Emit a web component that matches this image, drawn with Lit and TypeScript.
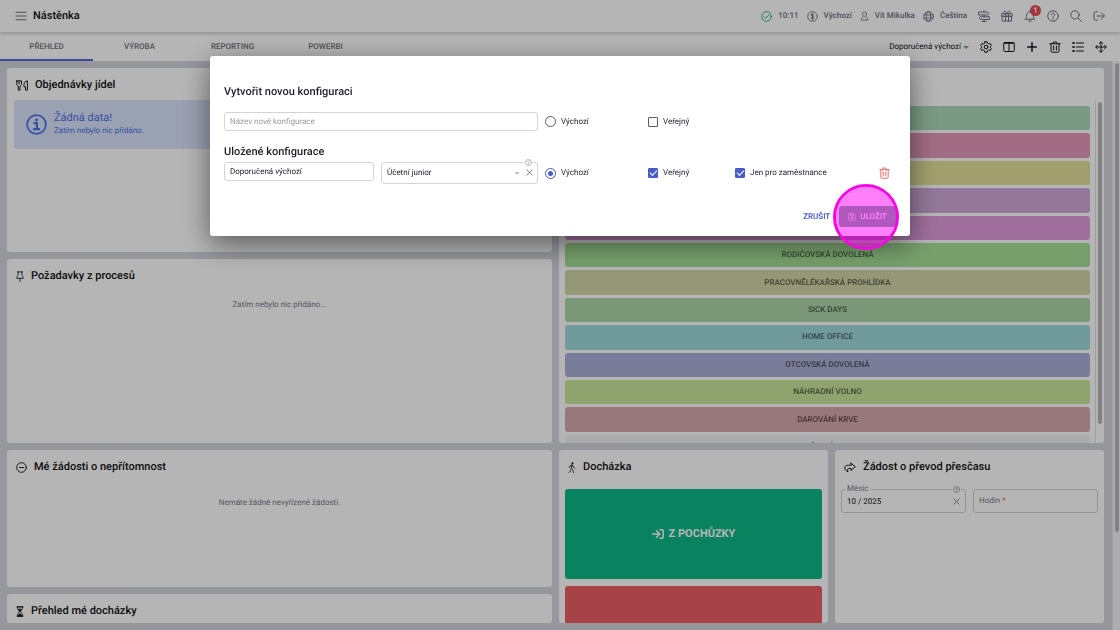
import { LitElement, html, css, svg, nothing } from "lit";
import { customElement, property } from "lit/decorators.js";
import { classMap } from "lit/directives/class-map.js";
import { styleMap } from "lit/directives/style-map.js";

const ICONS: Record<string, unknown> = {
  menu: svg`<path d="M2 4.5h20M2 12h20M2 19.5h20"/>`,
  checkCircle: svg`<circle cx="12" cy="12" r="10.5"/><path d="M7 12.5l3.5 3.5 6.5-7"/>`,
  dollar: svg`<circle cx="12" cy="12" r="10.5" stroke-dasharray="6 2.2"/><path d="M15 9c0-1.500-1.300-2.300-3-2.300s-3 .8-3 2.400c0 3.500 6.200 2 6.200 5.400 0 1.700-1.400 2.600-3.200 2.600s-3.200-.8-3.200-2.500M12 4.800v14.400"/>`,
  user: svg`<circle cx="12" cy="7.500" r="5.500"/><path d="M8.500 13.500C5 14.800 3.500 17.500 3.500 22h17c0-4.500-1.500-7.200-5-8.500"/>`,
  globe: svg`<circle cx="12" cy="12" r="10.500"/><ellipse cx="12" cy="12" rx="4.700" ry="10.500"/><path d="M2 8.500h20M2 15.500h20"/>`,
  signpost: svg`<path d="M12 1v3M12 10v3.500M12 19v4M8 23h8M2 4h17l3 3-3 3H2zM22 13.500H5l-3 2.700L5 19h17z"/>`,
  gift: svg`<path d="M1.500 7.500h21v5h-21zM3 12.500h18v9.500H3zM9 7.500V22M15 7.500V22M12 7.500C10 2 8 1.500 6.500 2.500 4.500 4 6 7 7 7.500M12 7.500c2-5.500 4-6 5.500-5 2 1.500.5 4.500-.5 5"/>`,
  bell: svg`<path d="M12 1.500v2M2.500 18.500h19c-2.500-2.500-3-4-3-8.500 0-4-2.700-6.500-6.500-6.500S5.500 6 5.500 10c0 4.500-.5 6-3 8.500zM9.500 22h5"/>`,
  help: svg`<circle cx="12" cy="12" r="10.500"/><path d="M8.800 9.500c0-2 1.500-3 3.300-3s3.200 1.100 3.200 2.800c0 2.400-3.200 2.500-3.200 4.900M12.100 16.500v2"/>`,
  search: svg`<circle cx="9.800" cy="9.800" r="8.300"/><path d="M16 16l7 7"/>`,
  logout: svg`<path d="M9 3.500H4.500c-1.500 0-2.500 1-2.500 2.500v12c0 1.500 1 2.500 2.500 2.500H9M8 12h15M16.500 5.500L23 12l-6.500 6.500"/>`,
  gear: svg`<path d="M9.700 1.500h4.600l.8 3.200 2.200 1.300 3.200-.9 2.200 4-2.300 2.300v1.200l2.300 2.300-2.200 4-3.200-.9-2.200 1.300-.8 3.200H9.700l-.8-3.200L6.700 18l-3.200.9-2.200-4 2.300-2.300v-1.200L1.300 9.100l2.200-4 3.200.9 2.200-1.300z"/><circle cx="12" cy="12" r="3.600"/>`,
  columns: svg`<rect x="1.500" y="3" width="21" height="18" rx="2"/><path d="M12 3v18M2 4.500h20"/>`,
  plus: svg`<path d="M12 3.500v17M3.500 12h17"/>`,
  trash: svg`<path d="M1.500 5.500h21M7.500 5.500L9 2h6l1.500 3.500M4 5.500V20c0 1.500 1 2.500 2.500 2.500h11c1.500 0 2.500-1 2.500-2.500V5.500M9.200 10v8M14.800 10v8"/>`,
  list: svg`<path d="M8.500 4h14.500M8.500 12h14.500M8.500 20h14.500"/><path d="M2.500 4h1M2.500 12h1M2.500 20h1" stroke-width="4"/>`,
  move: svg`<path d="M12 2v20M2 12h20M8.500 5L12 1.500 15.500 5M8.500 19l3.500 3.500 3.500-3.500M5 8.500L1.500 12 5 15.500M19 8.500l3.500 3.500-3.500 3.500"/>`,
  food: svg`<path d="M1.500 2v6.500c0 2.500 1.200 4 3 4.700V22h3.500v-8.800c1.800-.7 3-2.200 3-4.700V2H1.500zM6.200 2v6.500M22 2c-4 .5-6 4-6 8v5h3v7h3z"/>`,
  info: svg`<circle cx="12" cy="12" r="10.700"/><path d="M9.500 10.500h3V17M9 17.300h6" stroke-width="2.500"/><circle cx="12" cy="6.800" r="1.700" fill="currentColor" stroke="none"/>`,
  pin: svg`<path d="M4 2h16M6.500 2L6 9.500C4 11 2.500 13 2 16h20c-.5-3-2-5-4-6.500L17.500 2M12 16v7"/>`,
  minusCircle: svg`<circle cx="12" cy="12" r="10.500"/><path d="M7.500 12h9"/>`,
  hourglass: svg`<path d="M3 2h18M3 22h18" stroke-width="3"/><path d="M5 2v3c0 3.500 4.500 5 4.500 7S5 15.500 5 19v3h14v-3c0-3.500-4.500-5-4.500-7S19 8.500 19 5V2"/><path d="M8 7h8l-4 5zM7 21l5-5 5 5z" fill="currentColor"/>`,
  walk: svg`<ellipse cx="13.500" cy="3" rx="3" ry="2.200" fill="currentColor" stroke="none"/><path d="M4 12.500l2.500-4.500 6-1.500 3 4.500 5 2M12 7l-2 7 4.500 3.500 2 5.500M9 15.500L7.500 19 3 23"/>`,
  share: svg`<path d="M14 2.500l8.500 8-8.500 8v-4.500H9.500c-2.500 0-3 2-1.500 7.500-4-2.500-6.500-5-6.500-8.500 0-3.500 2.500-6 7-6H14z"/>`,
  login: svg`<path d="M1 12h14M9 5.500l6.500 6.500L9 18.500M16 3.500h4c1.500 0 2.500 1 2.500 2.500v12c0 1.500-1 2.500-2.500 2.500h-4"/>`,
  close: svg`<path d="M3 3l18 18M21 3L3 21"/>`,
  save: svg`<path d="M2 4c0-1.200.8-2 2-2h13l5 5v13c0 1.200-.8 2-2 2H4c-1.200 0-2-.8-2-2zM7 2v5.500h9V2"/><circle cx="12" cy="14.500" r="3.500"/>`,
};

const icon = (name: string, w = 12, stroke = 2, h = w) => svg`
  <svg class="icon" width=${w} height=${h} viewBox="0 0 24 24" preserveAspectRatio="none" fill="none"
    stroke="currentColor" stroke-width=${stroke} stroke-linecap="round" stroke-linejoin="round" aria-hidden="true">${ICONS[name]}</svg>`;

const base = css`
  *, *::before, *::after { box-sizing: border-box; }
  :host { font-family: Roboto, sans-serif; font-size: 8px; line-height: 12px; text-rendering: geometricPrecision; }
  .icon { display: block; flex: none; }
  button, input, select { font: inherit; color: inherit; margin: 0; text-rendering: inherit; }
  button { background: none; border: 0; padding: 0; cursor: pointer; }
  h1, h2, h3, p { margin: 0; }
`;

@customElement("dash-card")
export class DashCard extends LitElement {
  @property() heading = "";
  @property() glyph = "";
  @property({ type: Number }) glyphWidth = 12;

  static styles = [base, css`
    :host { display: flex; flex-direction: column; min-width: 0; min-height: 0; overflow: hidden; background: #fff; border-radius: 3px; }
    header { display: flex; align-items: center; gap: 7px; height: 32px; flex: none; padding: 2px 9px 0; color: #111; }
    h2 { font-size: 11px; font-weight: 500; line-height: 14px; }
    .body { flex: 1; min-height: 0; display: flex; flex-direction: column; }
  `];

  render() {
    return html`
      <header>${this.glyph ? icon(this.glyph, this.glyphWidth, 2, 11) : nothing}<h2>${this.heading}</h2></header>
      <div class="body"><slot></slot></div>`;
  }
}

@customElement("config-dialog")
export class ConfigDialog extends LitElement {
  static styles = [base, css`
    :host { display: block; width: 700px; max-width: 100%; }
    .dialog { background: #fff; border-radius: 3px; padding: 29px 14px 9px; color: #1d1d2b; box-shadow: 0 8px 28px rgba(0, 0, 0, 0.5); }
    h3 { font-size: 11px; font-weight: 500; line-height: 14px; }
    .row { display: grid; align-items: center; gap: 7px;
      grid-template-columns: minmax(0, 150fr) minmax(0, 157fr) minmax(0, 96fr) minmax(0, 80fr) minmax(0, 137fr) 17px; }
    .create { margin: 13px 0 14px; }
    .create .text { grid-column: span 2; }
    .saved { margin-top: 3px; }
    .saved .text { align-self: start; }
    .text, .pick select { width: 100%; height: 19px; padding: 0 5px; border: 1px solid #d4d4d8; border-radius: 3px; background: #fff; outline: none; }
    .text::placeholder { color: #9a9a9a; opacity: 1; }
    .pick { position: relative; display: block; }
    .pick select { display: block; height: 22px; appearance: none; }
    .caret { position: absolute; right: 18px; top: 10px; border: 3px solid transparent; border-top-color: #c4c4c8; border-bottom: 0; }
    .clear { position: absolute; right: 5px; top: 7px; color: #6e6e86; }
    .hint { position: absolute; right: 5px; top: -3px; background: #fff; color: #8a8a99; padding: 0 1px; }
    .choice { display: flex; align-items: center; gap: 5px; white-space: nowrap; }
    .choice input { appearance: none; flex: none; display: grid; place-items: center; border: 1px solid #5c5c66; }
    .choice input[type="radio"] { width: 11px; height: 11px; border-radius: 50%; }
    .choice input[type="radio"]:checked { border-color: #4a5cc5; }
    .choice input[type="radio"]:checked::after { content: ""; width: 5px; height: 5px; border-radius: 50%; background: #4a5cc5; }
    .choice input[type="checkbox"] { width: 10px; height: 10px; border-radius: 1px; }
    .choice input[type="checkbox"]:checked { background: #4a5cc5; border-color: #4a5cc5; }
    .choice input[type="checkbox"]:checked::after { content: ""; width: 7px; height: 4px; border: solid #fff; border-width: 0 0 1px 1px; transform: translateY(-1px) rotate(-45deg); }
    .delete { color: #e26a6a; justify-self: start; }
    footer { display: flex; justify-content: flex-end; align-items: center; gap: 9px; margin-top: 22px; font-weight: 600; }
    .cancel { color: #4a5cc5; }
    .spot { position: relative; }
    .spot::after { content: ""; position: absolute; left: -6px; top: 50%; width: 66px; height: 66px; transform: translateY(-50%);
      border: 3px solid #f506e3; border-radius: 50%; background: rgba(255, 0, 247, 0.5); background-clip: padding-box; pointer-events: none; }
    .save { display: flex; align-items: center; gap: 4px; height: 21px; padding: 0 9px; border-radius: 3px; color: #fff; background: #62b084; }
  `];

  render() {
    return html`
      <form class="dialog" role="dialog" aria-label="Vytvořit novou konfiguraci" @submit=${(e: Event) => e.preventDefault()}>
        <h3>Vytvořit novou konfiguraci</h3>
        <div class="row create">
          <input class="text" type="text" placeholder="Název nové konfigurace" aria-label="Název nové konfigurace" />
          <label class="choice"><input type="radio" name="default" />Výchozí</label>
          <label class="choice"><input type="checkbox" />Veřejný</label>
        </div>
        <h3>Uložené konfigurace</h3>
        <div class="row saved">
          <input class="text" type="text" .value=${"Doporučená výchozí"} aria-label="Název konfigurace" />
          <div class="pick">
            <select aria-label="Role"><option>Účetní junior</option></select>
            <span class="caret"></span>
            <button class="clear" type="button" aria-label="Vymazat">${icon("close", 7, 3)}</button>
            <span class="hint">${icon("help", 7, 2)}</span>
          </div>
          <label class="choice"><input type="radio" name="default" checked />Výchozí</label>
          <label class="choice"><input type="checkbox" checked />Veřejný</label>
          <label class="choice"><input type="checkbox" checked />Jen pro zaměstnance</label>
          <button class="delete" type="button" aria-label="Smazat">${icon("trash", 11, 2, 12)}</button>
        </div>
        <footer>
          <button class="cancel" type="button">ZRUŠIT</button>
          <div class="spot"><button class="save" type="submit">${icon("save", 8, 2)}ULOŽIT</button></div>
        </footer>
      </form>`;
  }
}

interface Absence { label?: string; color: string; plain?: boolean; }

@customElement("app-root")
export class AppRoot extends LitElement {
  private tabs = ["PŘEHLED", "VÝROBA", "REPORTING", "POWERBI"];
  private tools = ["gear", "columns", "plus", "trash", "list", "move"];
  private absences: Absence[] = [
    { color: "#acd9ba" },
    { color: "#e49aba" },
    { color: "#e4e19b" },
    { color: "#d0aad9" },
    { color: "#e09cdc" },
    { label: "RODIČOVSKÁ DOVOLENÁ", color: "#a8e198" },
    { label: "PRACOVNĚLÉKAŘSKÁ PROHLÍDKA", color: "#d2d6a6" },
    { label: "SICK DAYS", color: "#acd6a9" },
    { label: "HOME OFFICE", color: "#9fd9dc" },
    { label: "OTCOVSKÁ DOVOLENÁ", color: "#adb1d9" },
    { label: "NÁHRADNÍ VOLNO", color: "#c8e69c" },
    { label: "DAROVÁNÍ KRVE", color: "#d6a9ac" },
    { label: "SLUŽEBNÍ CESTA", color: "#f3f3f5", plain: true },
  ];

  static styles = [base, css`
    :host { display: flex; flex-direction: column; height: 100vh; overflow: hidden; background: #d3d3de; color: #111; }
    .top { display: flex; align-items: center; height: 33px; flex: none; padding: 0 15px; background: #fff; border-bottom: 1px solid #dcdce0; box-shadow: 0 1px 3px rgba(0, 0, 0, 0.2); position: relative; color: #6f6f82; }
    .top h1 { font-size: 11px; font-weight: 500; line-height: 14px; margin-left: 6px; color: #111; }
    .status { display: flex; align-items: center; gap: 11px; margin-left: auto; font-weight: 500; }
    .who { display: flex; gap: 8px; }
    .pair { display: flex; align-items: center; gap: 6px; }
    .ok { color: #1db46a; }
    .bell { position: relative; }
    .badge { position: absolute; right: -5px; top: -5px; min-width: 11px; height: 11px; border-radius: 6px; background: #ea4b55; color: #fff; line-height: 11px; text-align: center; }
    .bar { display: flex; align-items: center; height: 28px; flex: none; padding-right: 13px; background: #fff; }
    nav { display: flex; align-self: stretch; flex: 1; }
    nav button { flex: 0 1 93px; font-weight: 500; color: #73737a; border-bottom: 2px solid transparent; padding-top: 1px; }
    nav .active { border-color: #5568d8; }
    .tools { display: flex; align-items: center; gap: 11px; color: #14141f; }
    .config { display: flex; align-items: center; gap: 2px; }
    .down { border: 3px solid transparent; border-top-color: #8f8f99; border-bottom: 0; }
    .page { flex: 1; min-height: 0; display: flex; }
    .grid { flex: 1; min-width: 0; display: grid; gap: 7px; padding: 7px 8px 7px 7px; grid-template-columns: repeat(4, minmax(0, 1fr)); grid-template-rows: 184px 184px 137px minmax(0, 1fr); }
    .wide { grid-column: span 2; }
    .col3 { grid-column: 3; grid-row: 3 / span 2; }
    .col4 { grid-column: 4; grid-row: 3 / span 2; }
    .absence { grid-column: 3 / span 2; grid-row: 1 / span 2; }
    .rail { flex: none; width: 8px; padding: 2px; background: #f6f6f8; border-left: 1px solid #e0e0e4; }
    .thumb { width: 4px; border-radius: 2px; background: #b8b8b8; }
    .rail .thumb { height: 83%; }
    .info { display: flex; align-items: center; gap: 7px; height: 49px; margin: 0 7px; padding: 0 12px; border-radius: 3px; background: #dae3fb; color: #4c73e8; }
    .info p { padding-bottom: 2px; }
    .info strong { display: block; font-size: 11px; font-weight: 400; line-height: 14px; }
    .empty { text-align: center; color: #7b7b8c; padding-top: 8px; }
    .spaced { padding-top: 15px; }
    .scroller { flex: 1; min-height: 0; display: flex; overflow: hidden; }
    .list { flex: 1; height: 103%; margin: 6px 5px 0 6px; display: grid; grid-auto-rows: minmax(0, 1fr); gap: 3px; }
    .list button { border-radius: 3px; font-weight: 500; color: rgba(0, 0, 0, 0.6); }
    .list .plain { color: #4a5cc5; }
    .list-rail { width: 9px; padding: 2px; border-left: 1px solid #e0e0e4; }
    .list-rail .thumb { height: 95%; }
    .punch { display: flex; flex-direction: column; gap: 7px; padding: 7px 6px 0; }
    .punch button { display: flex; align-items: center; justify-content: center; gap: 5px; height: 90px; border-radius: 3px; font-size: 11px; font-weight: 700; color: #fff; background: #0db986; }
    .punch .leave { background: #ed5e68; }
    .form { display: grid; grid-template-columns: 1fr 1fr; gap: 7px; padding: 7px 6px 0; }
    .field { position: relative; display: block; }
    .field input { width: 100%; height: 24px; padding: 0 5px; border: 1px solid #cfcfd6; border-radius: 3px; background: none; outline: none; display: block; }
    .field span, .field button { position: absolute; color: #7b7b8c; }
    .field .label { left: 4px; top: -6px; padding: 0 2px; background: #fff; }
    .field .inner { left: 6px; top: 6px; }
    .field em { color: #e5484d; font-style: normal; }
    .field .clear { right: 6px; top: 9px; }
    .field .hint { right: 5px; top: -3px; padding: 0 1px; background: #fff; }
    .backdrop { position: fixed; inset: 0; display: flex; justify-content: center; align-items: flex-start; padding-top: 56px; background: rgba(0, 0, 0, 0.29); }
  `];

  render() {
    return html`
      <div class="top">
        <button aria-label="Menu">${icon("menu", 12, 2)}</button>
        <h1>Nástěnka</h1>
        <div class="status">
          <div class="who">
            <span class="pair"><span class="ok">${icon("checkCircle", 11)}</span>10:11</span>
            <span class="pair">${icon("dollar", 11)}Výchozí</span>
            <span class="pair">${icon("user", 9, 2, 10)}Vít Mikulka</span>
            <span class="pair">${icon("globe", 11)}Čeština</span>
          </div>
          ${icon("signpost", 12)}
          ${icon("gift", 12)}
          <span class="bell">${icon("bell", 12)}<span class="badge">1</span></span>
          ${icon("help", 12)}${icon("search", 12)}${icon("logout", 12)}
        </div>
      </div>
      <div class="bar">
        <nav>${this.tabs.map((t, i) => html`<button class=${classMap({ active: i === 0 })}>${t}</button>`)}</nav>
        <div class="tools">
          <button class="config">Doporučená výchozí<span class="down"></span></button>
          ${this.tools.map((t) => html`<button aria-label=${t}>${icon(t, 12, t === "plus" ? 3 : 2)}</button>`)}
        </div>
      </div>
      <div class="page">
        <main class="grid">
          <dash-card class="wide" heading="Objednávky jídel" glyph="food" glyphWidth="12">
            <div class="info">${icon("info", 21, 2)}<p><strong>Žádná data!</strong>Zatím nebylo nic přidáno.</p></div>
          </dash-card>
          <dash-card class="absence">
            <div class="scroller">
              <div class="list">
                ${this.absences.map((a) => html`<button class=${classMap({ plain: !!a.plain })} style=${styleMap({ backgroundColor: a.color })}>${a.label ?? nothing}</button>`)}
              </div>
              <div class="list-rail"><div class="thumb"></div></div>
            </div>
          </dash-card>
          <dash-card class="wide" heading="Požadavky z procesů" glyph="pin" glyphWidth="8">
            <p class="empty">Zatím nebylo nic přidáno...</p>
          </dash-card>
          <dash-card class="wide" heading="Mé žádosti o nepřítomnost" glyph="minusCircle" glyphWidth="11">
            <p class="empty spaced">Nemáte žádné nevyřízené žádosti.</p>
          </dash-card>
          <dash-card class="col3" heading="Docházka" glyph="walk" glyphWidth="8">
            <div class="punch">
              <button>${icon("login", 12, 3)}Z POCHŮZKY</button>
              <button class="leave" aria-label="Odchod"></button>
            </div>
          </dash-card>
          <dash-card class="col4" heading="Žádost o převod přesčasu" glyph="share" glyphWidth="12">
            <div class="form">
              <div class="field">
                <input id="month" type="text" .value=${"10 / 2025"} />
                <label for="month"><span class="label">Měsíc</span></label>
                <button class="clear" aria-label="Vymazat">${icon("close", 7, 3)}</button>
                <span class="hint">${icon("help", 7)}</span>
              </div>
              <label class="field"><input type="text" /><span class="inner">Hodin <em>*</em></span></label>
            </div>
          </dash-card>
          <dash-card class="wide" heading="Přehled mé docházky" glyph="hourglass" glyphWidth="8"></dash-card>
        </main>
        <div class="rail"><div class="thumb"></div></div>
      </div>
      <div class="backdrop"><config-dialog></config-dialog></div>`;
  }
}
